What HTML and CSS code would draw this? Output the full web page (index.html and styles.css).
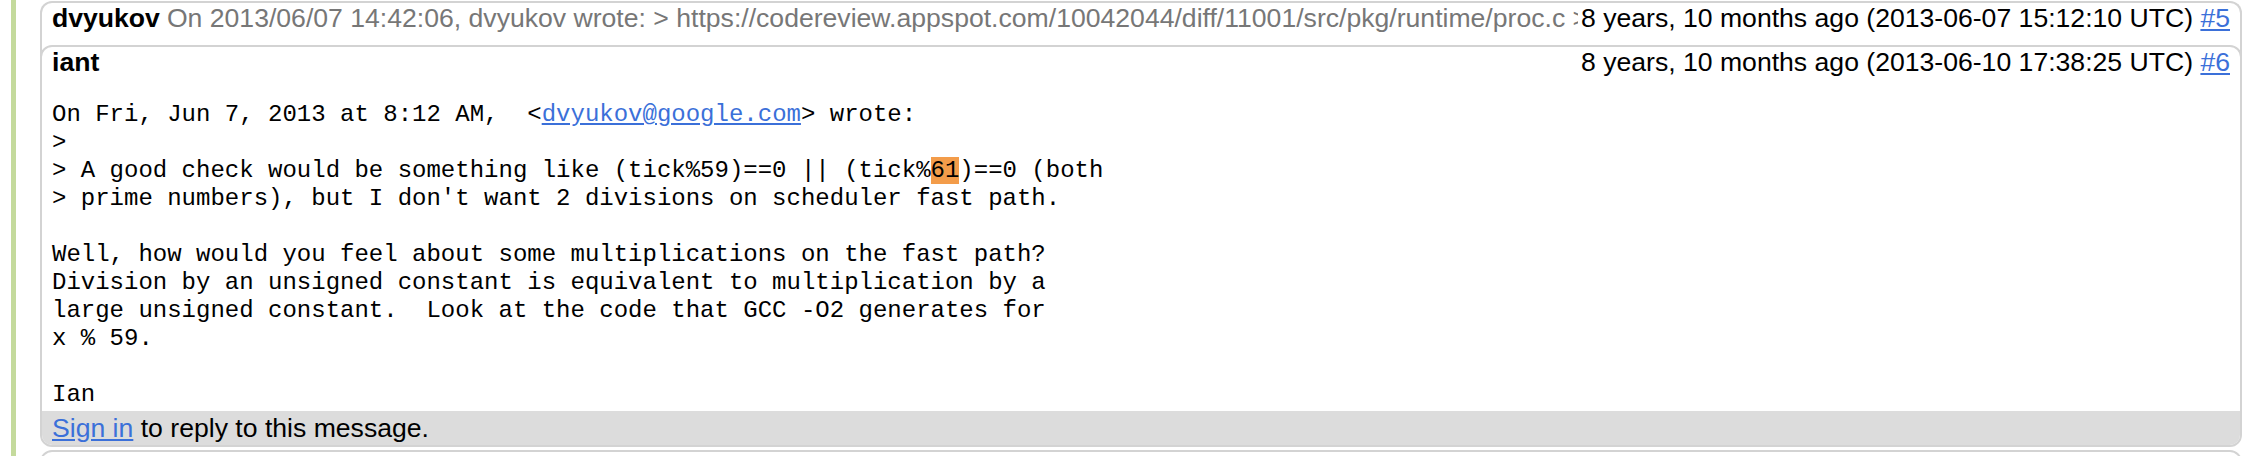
FILE: index.html
```html
<!DOCTYPE html>
<html>
<head>
<meta charset="utf-8">
<title>Message thread</title>
<link rel="stylesheet" href="styles.css">
</head>
<body>
<div class="thread">
  <div class="msg collapsed">
    <div class="msg-head">
      <span class="author">dvyukov</span>
      <span class="snippet">On 2013/06/07 14:42:06, dvyukov wrote: &gt; https://codereview.appspot.com/10042044/diff/11001/src/pkg/runtime/proc.c &gt; File src/pkg/runtime/proc.c (right):</span>
      <span class="date">8 years, 10 months ago (2013-06-07 15:12:10 UTC) <a href="#">#5</a></span>
    </div>
  </div>
  <div class="msg expanded">
    <div class="msg-head">
      <span class="author">iant</span>
      <span class="date">8 years, 10 months ago (2013-06-10 17:38:25 UTC) <a href="#">#6</a></span>
    </div>
<pre class="body">On Fri, Jun 7, 2013 at 8:12 AM,  &lt;<a href="#">dvyukov@google.com</a>&gt; wrote:
&gt;
&gt; A good check would be something like (tick%59)==0 || (tick%<span class="hl">61</span>)==0 (both
&gt; prime numbers), but I don't want 2 divisions on scheduler fast path.

Well, how would you feel about some multiplications on the fast path?
Division by an unsigned constant is equivalent to multiplication by a
large unsigned constant.  Look at the code that GCC -O2 generates for
x % 59.

Ian</pre>
    <div class="reply"><a href="#">Sign in</a> to reply to this message.</div>
  </div>
  <div class="msg next"></div>
</div>
</body>
</html>
```
FILE: styles.css
```css
html, body {
  margin: 0;
  padding: 0;
  background: #fff;
}
body {
  height: 456px;
  overflow: hidden;
  font-family: "Liberation Sans", Arial, Helvetica, sans-serif;
  font-size: 26.6px;
  color: #000;
}
a {
  color: #3b70d9;
  text-decoration: underline;
}
.thread {
  margin-left: 11px;
  border-left: 5px solid #c4da9c;
  padding: 1px 16px 0 24px;
  height: 100%;
  box-sizing: border-box;
}
.msg {
  border: 2px solid #d3d3d3;
  border-radius: 12px;
  background: #fff;
}
.msg.collapsed {
  border-bottom: 0;
  border-bottom-left-radius: 0;
  border-bottom-right-radius: 0;
  padding-bottom: 27px;
  margin-bottom: -15px;
}
.msg-head {
  display: flex;
  align-items: baseline;
  padding: 0 10px;
  line-height: 30px;
  white-space: nowrap;
}
.author {
  font-weight: bold;
}
.snippet {
  color: #777;
  flex: 1;
  min-width: 0;
  overflow: hidden;
  margin-left: 7px;
  margin-right: 3px;
}
.date {
  margin-left: auto;
}
.body {
  font-family: "Liberation Mono", "Courier New", monospace;
  font-size: 24px;
  line-height: 28px;
  margin: 24px 10px 2px;
  white-space: pre;
}
.hl {
  background: #f39c4a;
}
.reply {
  background: #dcdcdc;
  padding: 2px 10px;
  line-height: 30px;
  border-radius: 0 0 10px 10px;
}
.msg.next {
  margin-top: 3px;
  height: 30px;
}
```
